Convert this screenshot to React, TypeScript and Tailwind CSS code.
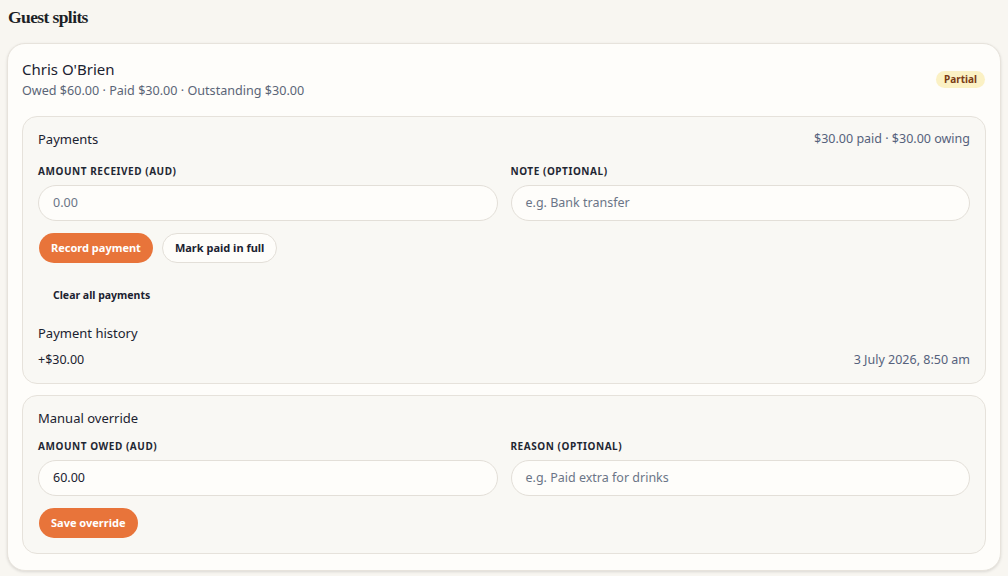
export default function App() {
  const font = { fontFamily: '"Noto Sans", "Open Sans", sans-serif' };
  return (
    <div className="min-h-[576px] w-[1008px] bg-[#f8f6f1] px-[7px] pt-[4px] text-[#1f2937]" style={font}>
      <h1
        className="ml-[1px] font-bold leading-[26px] tracking-[-0.6px] text-[#1c1f26]"
        style={{ fontFamily: '"Liberation Serif", "DejaVu Serif", serif', fontSize: 17.5 }}
      >
        Guest splits
      </h1>
      <div className="mt-[13px] rounded-[18px] border border-[#e7e3dc] bg-[#fefdfa] px-[14px] pb-[16px] pt-[15px] shadow-[0_1px_3px_rgba(0,0,0,0.12)]">
        <div className="flex items-start justify-between">
          <div>
            <div className="text-[15px] leading-[20px] text-[#1b2230]">Chris O'Brien</div>
            <div className="mt-[3px] text-[12.6px] leading-[18px] text-[#5b6577]">
              Owed $60.00 · Paid $30.00 · Outstanding $30.00
            </div>
          </div>
          <span className="mr-[1px] mt-[12px] rounded-full bg-[#fbf1c4] px-[8px] py-[1px] text-[10px] font-bold leading-[15px] text-[#7a3b14]">
            Partial
          </span>
        </div>

        <div className="mt-[16px] rounded-[15px] border border-[#e6e2db] bg-[#f9f8f4] px-[15px] pb-[14px] pt-[13px]">
          <div className="flex items-center justify-between leading-[18px]">
            <span className="text-[13px] text-[#1b2230]">Payments</span>
            <span className="text-[12.5px] text-[#56627c]">$30.00 paid · $30.00 owing</span>
          </div>
          <div className="mt-[16px] grid grid-cols-2 gap-x-[13px]">
            <Field label="AMOUNT RECEIVED (AUD)" placeholder="0.00" />
            <Field label="NOTE (OPTIONAL)" placeholder="e.g. Bank transfer" />
          </div>
          <div className="mt-[12px] flex gap-[9px] pl-[1px]">
            <button className="h-[30px] rounded-full bg-[#e8743a] px-[12px] text-[11px] font-bold text-white">
              Record payment
            </button>
            <button className="h-[30px] rounded-full border border-[#e3dfd8] bg-[#fefdfa] px-[12px] text-[11px] font-bold text-[#1b2230]">
              Mark paid in full
            </button>
          </div>
          <div className="mt-[18px]">
            <button className="h-[30px] rounded-full px-[15px] text-[10.5px] font-bold text-[#1b2230]">
              Clear all payments
            </button>
          </div>
          <div className="mt-[13px] text-[13px] leading-[18px] text-[#1b2230]">Payment history</div>
          <div className="mt-[9px] flex items-center justify-between text-[12.5px] leading-[18px]">
            <span className="text-[#1b2230]">+$30.00</span>
            <span className="text-[#56627c]">3 July 2026, 8:50 am</span>
          </div>
        </div>

        <div className="mt-[11px] rounded-[15px] border border-[#e6e2db] bg-[#f9f8f4] px-[15px] pb-[15px] pt-[13px]">
          <div className="text-[13px] leading-[18px] text-[#1b2230]">Manual override</div>
          <div className="mt-[12px] grid grid-cols-2 gap-x-[13px]">
            <Field label="AMOUNT OWED (AUD)" value="60.00" />
            <Field label="REASON (OPTIONAL)" placeholder="e.g. Paid extra for drinks" />
          </div>
          <div className="mt-[12px] pl-[1px]">
            <button className="h-[30px] rounded-full bg-[#e8743a] px-[12px] text-[11px] font-bold text-white">
              Save override
            </button>
          </div>
        </div>
      </div>
    </div>
  );
}

function Field({ label, placeholder, value }: { label: string; placeholder?: string; value?: string }) {
  return (
    <div>
      <div className="text-[10px] font-bold leading-[14px] tracking-[0.55px] text-[#1f2733]">{label}</div>
      <div className="mt-[7px] flex h-[36px] items-center rounded-full border border-[#e3dfd8] bg-[#fefdfa] px-[14px] text-[12.5px]">
        {value ? (
          <span className="text-[#1b2230]">{value}</span>
        ) : (
          <span className="text-[#6b7587]">{placeholder}</span>
        )}
      </div>
    </div>
  );
}
